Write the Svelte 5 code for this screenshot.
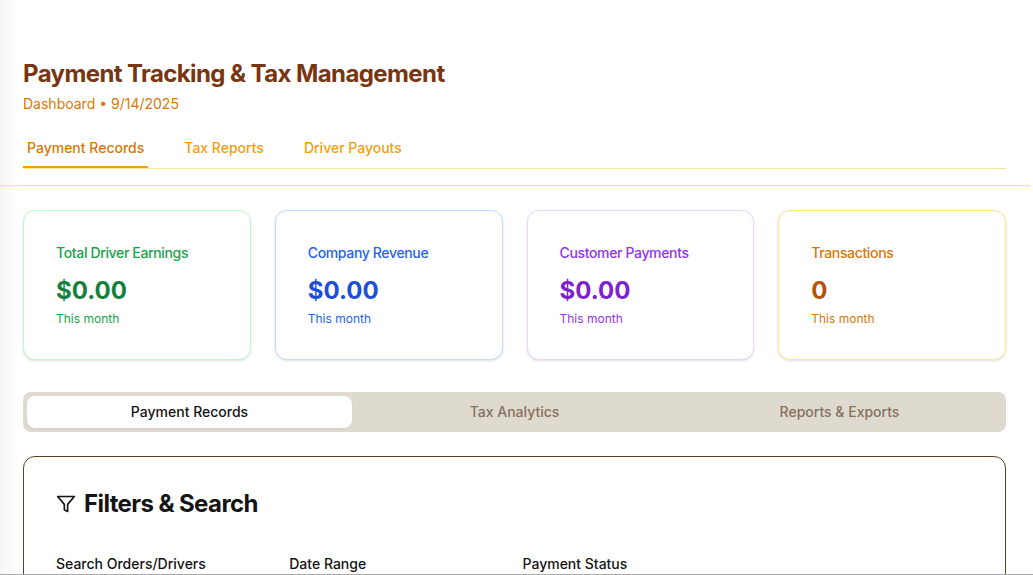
<script>
  const pages = ['Payment Records', 'Tax Reports', 'Driver Payouts'];
  const stats = [
    { label: 'Total Driver Earnings', value: '$0.00', tone: 'green' },
    { label: 'Company Revenue', value: '$0.00', tone: 'blue' },
    { label: 'Customer Payments', value: '$0.00', tone: 'purple' },
    { label: 'Transactions', value: '0', tone: 'amber' }
  ];
  const views = ['Payment Records', 'Tax Analytics', 'Reports & Exports'];
  const filters = ['Search Orders/Drivers', 'Date Range', 'Payment Status'];
  let page = $state(0);
  let view = $state(0);
</script>

<div class="shell">
  <header>
    <h1>Payment Tracking &amp; Tax Management</h1>
    <p class="crumb">Dashboard • 9/14/2025</p>
    <nav>
      {#each pages as name, i}
        <button class:active={page === i} onclick={() => (page = i)}>{name}</button>
      {/each}
    </nav>
  </header>
  <main>
    <section class="stats">
      {#each stats as s}
        <article class={s.tone}>
          <p class="label">{s.label}</p>
          <p class="value">{s.value}</p>
          <p class="note">This month</p>
        </article>
      {/each}
    </section>
    <div class="views" role="tablist">
      {#each views as name, i}
        <button role="tab" aria-selected={view === i} class:active={view === i} onclick={() => (view = i)}>{name}</button>
      {/each}
    </div>
    <section class="panel">
      <h2>
        <svg width="20" height="20" viewBox="0 0 24 24" fill="none" stroke="currentColor" stroke-width="2" stroke-linecap="round" stroke-linejoin="round" aria-hidden="true"><path d="M22 3H2l8 9.46V19l4 2v-8.54L22 3z" /></svg>
        Filters &amp; Search
      </h2>
      <div class="filters">
        {#each filters as name, i}
          <div class="field">
            <label for="filter-{i}">{name}</label>
            <input id="filter-{i}" />
          </div>
        {/each}
      </div>
    </section>
  </main>
</div>

<style>
  :global(body) { background: #fff; }
  .shell {
    box-sizing: border-box;
    height: 100vh;
    overflow: hidden;
    font-family: Inter, sans-serif;
    font-size: 14px;
    line-height: 20px;
    color: #141414;
    border-bottom: 1px solid #aaa;
    background: linear-gradient(to right, #f6f6f6, #fff 20px);
  }
  h1, h2, p { margin: 0; }
  button { font: inherit; border: 0; background: none; cursor: pointer; }
  header {
    margin-right: 3px;
    padding: 58px 24px 16px 23px;
    border-bottom: 1px solid #fde68a;
    box-shadow: 0 1px 2px #0000000d;
  }
  h1 { font-size: 24px; line-height: 32px; font-weight: 700; letter-spacing: -0.6px; color: #78350f; }
  .crumb { margin-top: 4px; color: #d97706; }
  nav { display: flex; gap: 32px; margin-top: 16px; border-bottom: 1px solid #fde68a; }
  nav button { padding: 8px 4px; border-bottom: 2px solid transparent; font-weight: 500; color: #f59e0b; }
  nav .active { color: #d97706; border-color: #f59e0b; }
  main { padding: 24px 27px 0 23px; }
  .stats { display: grid; grid-template-columns: repeat(4, 1fr); gap: 24px; }
  article { padding: 32px; border: 1px solid; border-radius: 12px; background: #fff; box-shadow: 0 1px 3px #0000001a, 0 1px 2px -1px #0000001a; }
  .label { font-weight: 500; letter-spacing: -0.025em; }
  .value { margin-top: 12px; font-size: 24px; line-height: 32px; font-weight: 700; }
  .note { margin-top: 4px; font-size: 12px; line-height: 16px; }
  .green { color: #16a34a; border-color: #bbf7d0; }
  .green .value { color: #15803d; }
  .blue { color: #2563eb; border-color: #bfdbfe; }
  .blue .value { color: #1d4ed8; }
  .purple { color: #9333ea; border-color: #e9d5ff; }
  .purple .value { color: #7e22ce; }
  .amber { color: #d97706; border-color: #fde68a; }
  .amber .value { color: #b45309; }
  .views { display: grid; grid-template-columns: repeat(3, 1fr); margin-top: 32px; padding: 4px; border-radius: 8px; background: #dfdacf; }
  .views button { padding: 6px 12px; border-radius: 8px; font-weight: 500; color: #85705f; }
  .views .active { background: #fff; color: #141414; box-shadow: 0 1px 2px #0000000d; }
  .panel { margin-top: 24px; padding: 32px; border: 1px solid #5c4020; border-radius: 12px; background: #fff; }
  h2 { display: flex; align-items: center; gap: 8px; font-size: 24px; line-height: 30px; font-weight: 700; letter-spacing: -0.6px; }
  .filters { display: grid; grid-template-columns: repeat(4, 1fr); gap: 16px; margin-top: 35px; }
  label { display: block; font-weight: 500; }
  input { box-sizing: border-box; width: 100%; height: 40px; margin-top: 8px; border: 1px solid #d6d3d1; border-radius: 8px; }
</style>
